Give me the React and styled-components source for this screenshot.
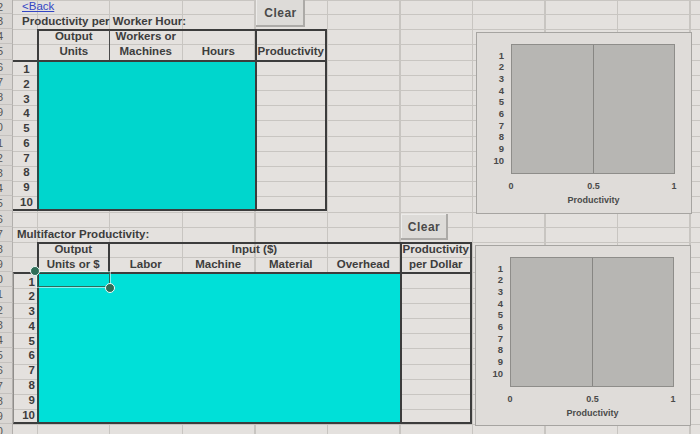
import React from "react";
import styled, { createGlobalStyle, css } from "styled-components";

const GlobalStyle = createGlobalStyle`
  html, body {
    margin: 0;
    padding: 0;
    background: #e4e1de;
  }
  body {
    font-family: "Liberation Sans", Arial, sans-serif;
    overflow: hidden;
  }
`;

const INK = "#3d3d3d";
const RULE = "2px solid #3c3c3c";

// grid placement shared by every part of the sheet
const place = css`
  grid-column: ${(p) => p.$col} / span ${(p) => p.$cols || 1};
  grid-row: ${(p) => p.$row} / span ${(p) => p.$rows || 1};
`;

const Sheet = styled.div`
  display: grid;
  grid-template-columns: 13px 24px repeat(9, 72.5px) 1fr;
  grid-template-rows: 14px repeat(28, 15.2px);
  width: 700px;
  height: 440px;
  overflow: hidden;
  color: ${INK};
  background-color: #e4e1de;
  background-image: repeating-linear-gradient(
      to right,
      #c8c5c1 0 1px,
      transparent 1px 72.5px
    ),
    repeating-linear-gradient(to bottom, #c8c5c1 0 1px, transparent 1px 15.2px);
  background-position: 37px 0, 0 14px;
`;

const RowHead = styled.div`
  ${place}
  display: flex;
  align-items: center;
  justify-content: flex-end;
  padding-right: 9px;
  overflow: hidden;
  white-space: nowrap;
  font-size: 11px;
  color: #555;
  background: #d9d6d3;
  border-right: 1px solid #b2afac;
  border-bottom: 1px solid #c4c1be;
`;

const BackLink = styled.a`
  ${place}
  padding-left: 9px;
  font-size: 11.5px;
  line-height: 12px;
  color: #3346c4;
  text-decoration: underline;
  white-space: nowrap;
`;

const Caption = styled.div`
  ${place}
  padding-left: ${(p) => p.$indent}px;
  font-size: 11.5px;
  font-weight: bold;
  line-height: 15.2px;
  white-space: nowrap;
`;

const HeadCell = styled.div`
  ${place}
  display: flex;
  flex-direction: column;
  justify-content: flex-end;
  align-items: center;
  font-size: 11.5px;
  font-weight: bold;
  line-height: 15.2px;
  white-space: nowrap;
  border-top: ${(p) => (p.$top ? RULE : "none")};
  border-left: ${(p) => (p.$left ? RULE : "none")};
  border-right: ${(p) =>
    p.$right === "thin" ? "1px solid #4a4a4a" : p.$right ? RULE : "none"};
`;

const NumColumn = styled.div`
  ${place}
  display: flex;
  flex-direction: column;
  border-top: ${RULE};
  border-bottom: ${RULE};
  border-left: ${(p) => (p.$framed ? "1px solid #8f8d8a" : "none")};
`;

const Num = styled.div`
  flex: 1;
  display: flex;
  align-items: center;
  justify-content: ${(p) => (p.$right ? "flex-end" : "center")};
  padding: ${(p) => (p.$right ? "0 2px 0 0" : "0 0 0 3px")};
  font-size: 11.5px;
  font-weight: bold;
`;

const InputBlock = styled.div`
  ${place}
  background: ${(p) => p.$tone};
  border-top: ${RULE};
  border-bottom: ${RULE};
  border-left: 2px solid #2c4c48;
`;

const ResultColumn = styled.div`
  ${place}
  border: ${RULE};
`;

const ClearButton = styled.button`
  ${place}
  align-self: start;
  justify-self: start;
  width: ${(p) => p.$w}px;
  height: ${(p) => p.$h}px;
  margin: ${(p) => p.$m};
  padding: 0;
  background: #dddbd8;
  border: none;
  box-shadow: inset -2px -2px 0 #acaaa7, inset 1px 1px 0 #ecebe9;
  font-family: "Liberation Sans", Arial, sans-serif;
  font-size: 12px;
  font-weight: bold;
  letter-spacing: 0.5px;
  color: #4a4a4a;
`;

const Selection = styled.div`
  ${place}
  position: relative;
  border: 1px solid #2d6b5c;
  box-shadow: 0 0 0 1px rgba(255, 255, 255, 0.55);
`;

const Handle = styled.span`
  position: absolute;
  width: 8px;
  height: 8px;
  border-radius: 50%;
  background: #2f6e57;
  border: 1.5px solid #f2fbfa;
  ${(p) =>
    p.$end ? "right: -6px; bottom: -7px;" : "left: -8px; top: -7px;"}
`;

const ChartFrame = styled.div`
  ${place}
  align-self: start;
  justify-self: start;
  width: 216px;
  height: ${(p) => p.$h}px;
  margin: ${(p) => p.$m};
  background: #dfdcd9;
  border: 1px solid #a6a4a1;
  box-sizing: border-box;
  svg {
    display: block;
    font-family: "Liberation Sans", Arial, sans-serif;
  }
`;

function ProductivityChart({ col, row, rows, m, h }) {
  const ticks = Array.from({ length: 10 }, (_, i) => i + 1);
  return (
    <ChartFrame $col={col} $cols={4} $row={row} $rows={rows} $m={m} $h={h}>
      <svg width="214" height={h - 2} viewBox={`0 0 214 ${h - 2}`}>
        <rect x="34.5" y="11.5" width="163" height="129" fill="#b7b6b3" stroke="#8e8d8a" />
        <line x1="116.5" y1="12" x2="116.5" y2="140" stroke="#878683" />
        {ticks.map((t, i) => (
          <text
            key={t}
            x="27"
            y={25.8 + i * 11.67}
            textAnchor="end"
            fontSize="9.5"
            fontWeight="bold"
            fill="#4a4a4a"
          >
            {t}
          </text>
        ))}
        <text x="34" y="155.5" textAnchor="middle" fontSize="9" fontWeight="bold" fill="#4a4a4a">
          0
        </text>
        <text x="116.5" y="155.5" textAnchor="middle" fontSize="9" fontWeight="bold" fill="#4a4a4a">
          0.5
        </text>
        <text x="197" y="155.5" textAnchor="middle" fontSize="9" fontWeight="bold" fill="#4a4a4a">
          1
        </text>
        <text x="116.5" y="170" textAnchor="middle" fontSize="9" fontWeight="bold" fill="#4a4a4a">
          Productivity
        </text>
      </svg>
    </ChartFrame>
  );
}

const numbers = Array.from({ length: 10 }, (_, i) => i + 1);

export default function App() {
  return (
    <>
      <GlobalStyle />
      <Sheet>
        {Array.from({ length: 29 }, (_, i) => (
          <RowHead key={i} $col={1} $row={i + 1}>
            {i + 2}
          </RowHead>
        ))}

        {/* productivity per worker hour */}
        <BackLink $col={2} $cols={3} $row={1}>
          &lt;Back
        </BackLink>
        <Caption $col={2} $cols={5} $row={2} $indent={9}>
          Productivity per Worker Hour:
        </Caption>
        <HeadCell $col={3} $row={3} $rows={2} $top $left $right="thin">
          <span>Output</span>
          <span>Units</span>
        </HeadCell>
        <HeadCell $col={4} $row={3} $rows={2} $top>
          <span>Workers or</span>
          <span>Machines</span>
        </HeadCell>
        <HeadCell $col={5} $row={3} $rows={2} $top>
          <span>Hours</span>
        </HeadCell>
        <HeadCell $col={6} $row={3} $rows={2} $top $left $right>
          <span>Productivity</span>
        </HeadCell>
        <NumColumn $col={2} $row={5} $rows={10}>
          {numbers.map((n) => (
            <Num key={n}>{n}</Num>
          ))}
        </NumColumn>
        <InputBlock $col={3} $cols={3} $row={5} $rows={10} $tone="#00d6cd" />
        <ResultColumn $col={6} $row={5} $rows={10} />
        <ClearButton $col={6} $row={1} $rows={2} $w={49} $h={29} $m="-2px 0 0 1.5px">
          Clear
        </ClearButton>
        <ProductivityChart col={9} row={3} rows={12} m="3px 0 0 4px" h={182} />

        {/* multifactor productivity */}
        <Caption $col={2} $cols={5} $row={16} $indent={4}>
          Multifactor Productivity:
        </Caption>
        <HeadCell $col={3} $row={17} $rows={2} $top $left $right>
          <span>Output</span>
          <span>Units or $</span>
        </HeadCell>
        <HeadCell $col={4} $cols={4} $row={17} $top>
          <span>Input ($)</span>
        </HeadCell>
        <HeadCell $col={4} $row={18}>
          <span>Labor</span>
        </HeadCell>
        <HeadCell $col={5} $row={18}>
          <span>Machine</span>
        </HeadCell>
        <HeadCell $col={6} $row={18}>
          <span>Material</span>
        </HeadCell>
        <HeadCell $col={7} $row={18}>
          <span>Overhead</span>
        </HeadCell>
        <HeadCell $col={8} $row={17} $rows={2} $top $left $right>
          <span>Productivity</span>
          <span>per Dollar</span>
        </HeadCell>
        <NumColumn $col={2} $row={19} $rows={10} $framed>
          {numbers.map((n) => (
            <Num key={n} $right>
              {n}
            </Num>
          ))}
        </NumColumn>
        <InputBlock $col={3} $cols={5} $row={19} $rows={10} $tone="#00e0d8" />
        <ResultColumn $col={8} $row={19} $rows={10} />
        <Selection $col={3} $row={19}>
          <Handle />
          <Handle $end />
        </Selection>
        <ClearButton $col={8} $row={15} $rows={2} $w={47} $h={26} $m="3px 0 0 1px">
          Clear
        </ClearButton>
        <ProductivityChart col={9} row={17} rows={12} m="3px 0 0 3px" h={181} />
      </Sheet>
    </>
  );
}
